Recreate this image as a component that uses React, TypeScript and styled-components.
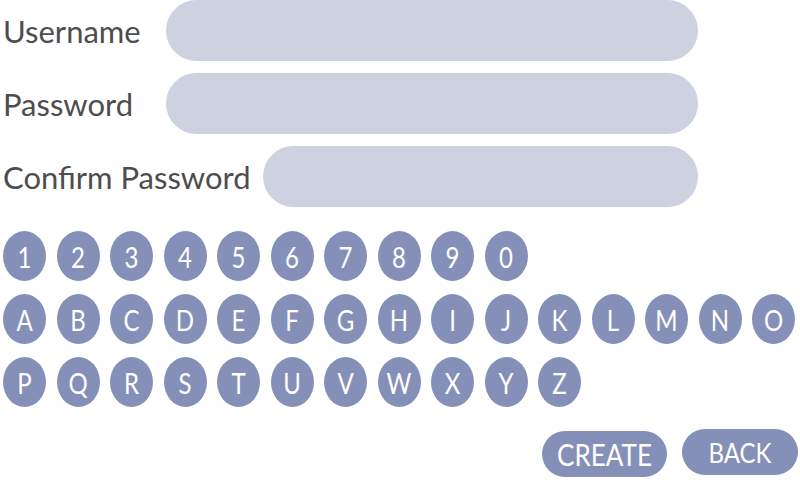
import React from 'react';
import styled, { createGlobalStyle } from 'styled-components';

const GlobalStyle = createGlobalStyle`
    html, body {
        margin: 0;
        padding: 0;
        background: #fff;
        overflow: hidden;
    }
    body {
        font-family: Lato, "Open Sans", "DejaVu Sans", sans-serif;
    }
`;

const Screen = styled.div`
    width: 800px;
    height: 480px;
    box-sizing: border-box;
    padding: 0 2px 0 3px;
    display: flex;
    flex-direction: column;
`;

const Form = styled.div`
    display: flex;
    flex-direction: column;
    gap: 12px;
    width: 695px;
`;

const Row = styled.div`
    display: flex;
    align-items: center;
    height: 61px;
`;

const Label = styled.span<{ $width?: number }>`
    flex: 0 0 ${p => (p.$width ? `${p.$width}px` : 'auto')};
    font-size: 31px;
    color: #4d4d4d;
    white-space: nowrap;
    margin-right: ${p => (p.$width ? 0 : 12)}px;
`;

const Field = styled.div`
    flex: 1;
    height: 100%;
    border-radius: 31px;
    background: #cdd1e0;
`;

const Keyboard = styled.div`
    display: flex;
    flex-direction: column;
    gap: 13px;
    margin-top: 24px;
`;

const KeyRow = styled.div`
    display: flex;
    gap: 10.5px;
`;

const Key = styled.button`
    width: 43px;
    height: 50px;
    border: none;
    border-radius: 50%;
    background: #8590b9;
    color: #fff;
    font-family: Lato, "Open Sans", sans-serif;
    font-size: 24px;
    padding: 0;
    display: flex;
    align-items: center;
    justify-content: center;
    cursor: pointer;

    span {
        display: inline-block;
        transform: scaleY(1.2);
    }
`;

const Actions = styled.div`
    display: flex;
    justify-content: flex-end;
    align-items: flex-start;
    gap: 15px;
    margin-top: 22px;
`;

const Action = styled.button<{ $width: number; $drop?: number; $size: number }>`
    width: ${p => p.$width}px;
    height: 46px;
    margin-top: ${p => p.$drop ?? 0}px;
    border: none;
    border-radius: 24px;
    background: #8590b9;
    color: #fff;
    font-family: Lato, "Open Sans", sans-serif;
    font-size: ${p => p.$size}px;
    padding: 0;
    cursor: pointer;

    span {
        display: inline-block;
        transform: scaleY(1.15);
    }
`;

const rows = ['1234567890', 'ABCDEFGHIJKLMNO', 'PQRSTUVWXYZ'];

export default function App(): JSX.Element
{
    return (
        <>
            <GlobalStyle />
            <Screen>
                <Form>
                    <Row>
                        <Label $width={163}>Username</Label>
                        <Field />
                    </Row>
                    <Row>
                        <Label $width={163}>Password</Label>
                        <Field />
                    </Row>
                    <Row>
                        <Label>Confirm Password</Label>
                        <Field />
                    </Row>
                </Form>
                <Keyboard>
                    {rows.map(row => (
                        <KeyRow key={row}>
                            {row.split('').map(ch => (
                                <Key key={ch}><span>{ch}</span></Key>
                            ))}
                        </KeyRow>
                    ))}
                </Keyboard>
                <Actions>
                    <Action $width={125} $drop={2} $size={26}><span>CREATE</span></Action>
                    <Action $width={116} $size={24}><span>BACK</span></Action>
                </Actions>
            </Screen>
        </>
    );
}
